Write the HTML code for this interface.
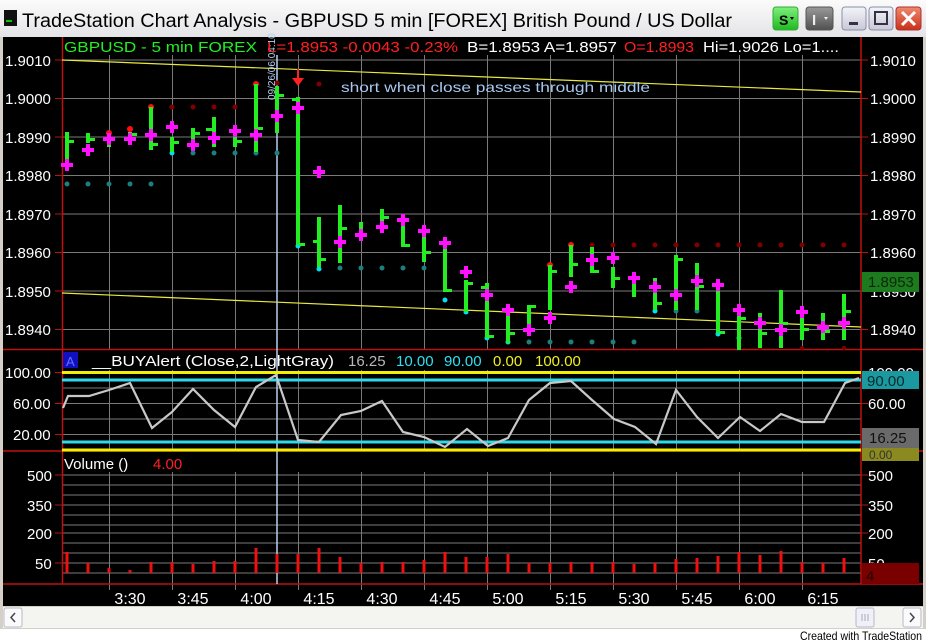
<!DOCTYPE html>
<html><head><meta charset="utf-8"><style>
html,body{margin:0;padding:0;background:#fff;width:926px;height:643px;overflow:hidden}
svg{display:block}
text{font-family:"Liberation Sans",sans-serif}
</style></head><body>
<svg width="926" height="643" viewBox="0 0 926 643" xmlns="http://www.w3.org/2000/svg">
<defs>
<linearGradient id="tb" x1="0" y1="0" x2="0" y2="1"><stop offset="0" stop-color="#fbfbfb"/><stop offset="1" stop-color="#e4e4e8"/></linearGradient>
<linearGradient id="gs" x1="0" y1="0" x2="0" y2="1"><stop offset="0" stop-color="#7ff07f"/><stop offset="1" stop-color="#1fb81f"/></linearGradient>
<linearGradient id="gi" x1="0" y1="0" x2="0" y2="1"><stop offset="0" stop-color="#9a9a9a"/><stop offset="1" stop-color="#505050"/></linearGradient>
<linearGradient id="gb" x1="0" y1="0" x2="0" y2="1"><stop offset="0" stop-color="#f4f4fa"/><stop offset="1" stop-color="#c8c8d8"/></linearGradient>
<linearGradient id="gr" x1="0" y1="0" x2="0" y2="1"><stop offset="0" stop-color="#f08a70"/><stop offset="1" stop-color="#c83018"/></linearGradient>
</defs>
<!-- title bar -->
<rect x="0" y="0" width="926" height="37" fill="url(#tb)"/>
<rect x="4" y="10" width="13" height="16" fill="#111"/><rect x="6" y="20" width="6" height="2" fill="#0c0"/>
<text x="22" y="27" font-size="19" fill="#000" textLength="710" lengthAdjust="spacingAndGlyphs">TradeStation Chart Analysis - GBPUSD  5 min  [FOREX] British Pound / US Dollar</text>
<rect x="773" y="7" width="25" height="23" rx="3" fill="url(#gs)" stroke="#3a3" />
<text x="779" y="25" font-size="14" font-weight="bold" fill="#000">S</text><path d="M790 17l4 0-2 3z" fill="#000"/>
<rect x="806" y="7" width="27" height="23" rx="3" fill="url(#gi)" stroke="#555"/>
<text x="812" y="25" font-size="15" font-weight="bold" fill="#eee">I</text><path d="M824 17l4 0-2 3z" fill="#eee"/>
<rect x="842" y="7" width="24" height="23" rx="3" fill="url(#gb)" stroke="#8890a8"/><rect x="849" y="22" width="9" height="3" fill="#334"/>
<rect x="869" y="7" width="24" height="23" rx="3" fill="url(#gb)" stroke="#8890a8"/><rect x="875" y="12" width="12" height="12" fill="none" stroke="#334" stroke-width="2"/>
<rect x="896" y="7" width="25" height="23" rx="3" fill="url(#gr)" stroke="#a33"/><path d="M902 12l13 13M915 12l-13 13" stroke="#fff" stroke-width="3"/>
<!-- frame -->
<rect x="0" y="37" width="926" height="592" fill="#d4d0c8"/>
<rect x="3" y="37" width="920" height="569" fill="#000"/>
<!-- grid -->
<g stroke="#7a7a7a" stroke-width="1">
<path d="M62 60H861M62 98.5H861M62 137H861M62 175.5H861M62 214H861M62 252.5H861M62 291H861M62 329.5H861"/>
<path d="M62 372.5H861M62 388H861M62 403.5H861M62 419H861M62 434.5H861"/>
<path d="M62 475H861M62 485H861M62 495H861M62 505H861M62 515H861M62 525H861M62 533H861M62 543H861M62 553H861M62 563H861M62 573H861"/>
<path d="M109.5 55V349M172.5 55V349M235.5 55V349M298.5 55V349M361.5 55V349M424.5 55V349M487.5 55V349M550.5 55V349M613.5 55V349M676.5 55V349M739.5 55V349M802.5 55V349"/>
<path d="M109.5 370V451M172.5 370V451M235.5 370V451M298.5 370V451M361.5 370V451M424.5 370V451M487.5 370V451M550.5 370V451M613.5 370V451M676.5 370V451M739.5 370V451M802.5 370V451"/>
<path d="M109.5 472V590M172.5 472V590M235.5 472V590M298.5 472V590M361.5 472V590M424.5 472V590M487.5 472V590M550.5 472V590M613.5 472V590M676.5 472V590M739.5 472V590M802.5 472V590"/>
</g>
<!-- panel borders -->
<g stroke="#c01010" stroke-width="1.5">
<path d="M62.5 37V584M861 37V584M3 349.5H923M3 451H923M3 584H923"/>
</g>
<g stroke="#c01010" stroke-width="1">
<path d="M55 60H62M55 98.5H62M55 137H62M55 175.5H62M55 214H62M55 252.5H62M55 291H62M55 329.5H62M861 60H868M861 98.5H868M861 137H868M861 175.5H868M861 214H868M861 252.5H868M861 291H868M861 329.5H868"/>
<path d="M55 372.5H62M55 403.5H62M55 434.5H62M861 403.5H868M55 475H62M55 505H62M55 533H62M55 563H62M861 475H868M861 505H868M861 533H868"/>
</g>
<!-- trend lines -->
<path d="M62 60L861 92M62 293L861 327" stroke="#e8e840" stroke-width="1.2" fill="none"/>
<!-- cursor line -->
<path d="M277 55V584" stroke="#b8d0f0" stroke-width="1.5"/>
<!-- dots -->
<g fill="#1a8080">
<circle cx="67" cy="184" r="2.5"/><circle cx="88" cy="184" r="2.5"/><circle cx="109" cy="184" r="2.5"/><circle cx="130" cy="184" r="2.5"/><circle cx="151" cy="184" r="2.5"/>
<circle cx="193" cy="153" r="2.5"/><circle cx="214" cy="153" r="2.5"/><circle cx="235" cy="153" r="2.5"/><circle cx="256" cy="153" r="2.5"/><circle cx="277" cy="153" r="2.5"/>
<circle cx="340" cy="268" r="2.5"/><circle cx="361" cy="268" r="2.5"/><circle cx="382" cy="268" r="2.5"/><circle cx="403" cy="268" r="2.5"/><circle cx="424" cy="268" r="2.5"/>
<circle cx="529" cy="342" r="2.5"/><circle cx="550" cy="342" r="2.5"/><circle cx="571" cy="342" r="2.5"/><circle cx="592" cy="342" r="2.5"/><circle cx="613" cy="342" r="2.5"/><circle cx="634" cy="342" r="2.5"/>
<circle cx="676" cy="311" r="2.5"/><circle cx="697" cy="311" r="2.5"/>
</g>
<g fill="#00e0f0">
<circle cx="172" cy="153" r="2.5"/><circle cx="298" cy="246" r="2.5"/><circle cx="319" cy="269" r="2.5"/><circle cx="445" cy="300" r="2.5"/><circle cx="466" cy="312" r="2.5"/><circle cx="487" cy="338" r="2.5"/><circle cx="508" cy="342" r="2.5"/><circle cx="655" cy="311" r="2.5"/><circle cx="718" cy="334" r="2.5"/><circle cx="739" cy="338" r="2.5"/>
</g>
<g fill="#800000">
<circle cx="172" cy="107" r="2.5"/><circle cx="193" cy="107" r="2.5"/><circle cx="214" cy="107" r="2.5"/><circle cx="235" cy="107" r="2.5"/><circle cx="277" cy="83" r="2.5"/><circle cx="319" cy="84" r="2.5"/>
<circle cx="592" cy="245" r="2.5"/><circle cx="613" cy="245" r="2.5"/><circle cx="634" cy="245" r="2.5"/><circle cx="655" cy="245" r="2.5"/><circle cx="676" cy="245" r="2.5"/><circle cx="697" cy="245" r="2.5"/><circle cx="718" cy="245" r="2.5"/><circle cx="739" cy="245" r="2.5"/><circle cx="760" cy="245" r="2.5"/><circle cx="781" cy="245" r="2.5"/><circle cx="802" cy="245" r="2.5"/><circle cx="823" cy="245" r="2.5"/><circle cx="844" cy="245" r="2.5"/>
<circle cx="760" cy="348" r="2"/><circle cx="802" cy="348" r="2"/><circle cx="844" cy="348" r="2"/>
</g>
<g fill="#ff1010">
<circle cx="109" cy="133" r="3"/><circle cx="130" cy="129" r="3"/><circle cx="151" cy="107" r="3"/><circle cx="256" cy="84" r="3"/><circle cx="550" cy="265" r="3"/><circle cx="571" cy="245" r="3"/>
</g>
<!-- green bars: rect + ticks -->
<g fill="#22ee22">
<rect x="65" y="132" width="4" height="30"/><rect x="69" y="140" width="5" height="3"/>
<rect x="86" y="133" width="4" height="10"/><rect x="90" y="138" width="5" height="3"/>
<rect x="107" y="135" width="4" height="12"/>
<rect x="128" y="132" width="4" height="11"/><rect x="132" y="133" width="5" height="3"/>
<rect x="149" y="107" width="4" height="43"/><rect x="153" y="143" width="5" height="3"/>
<rect x="170" y="137" width="4" height="15"/><rect x="174" y="141" width="5" height="3"/>
<rect x="191" y="128" width="4" height="20"/><rect x="195" y="132" width="5" height="3"/>
<rect x="212" y="117" width="4" height="30"/><rect x="206" y="128" width="6" height="3"/>
<rect x="233" y="125" width="4" height="22"/><rect x="237" y="140" width="5" height="3"/>
<rect x="254" y="84" width="4" height="68"/><rect x="258" y="127" width="5" height="3"/>
<rect x="275" y="86" width="4" height="47"/><rect x="279" y="94" width="5" height="3"/>
<rect x="296" y="97" width="4" height="148"/><rect x="300" y="243" width="5" height="3"/><rect x="292" y="98" width="4" height="3"/>
<rect x="317" y="217" width="4" height="50"/><rect x="321" y="258" width="5" height="3"/><rect x="313" y="240" width="4" height="3"/>
<rect x="338" y="205" width="4" height="58"/><rect x="342" y="227" width="5" height="3"/>
<rect x="359" y="222" width="4" height="8"/>
<rect x="380" y="209" width="4" height="14"/><rect x="384" y="216" width="5" height="3"/>
<rect x="401" y="225" width="4" height="22"/><rect x="405" y="244" width="5" height="3"/>
<rect x="422" y="225" width="4" height="37"/><rect x="426" y="251" width="5" height="3"/>
<rect x="443" y="247" width="4" height="45"/><rect x="447" y="289" width="5" height="3"/>
<rect x="464" y="280" width="4" height="32"/><rect x="468" y="282" width="5" height="3"/>
<rect x="485" y="283" width="4" height="55"/><rect x="489" y="335" width="5" height="3"/><rect x="481" y="286" width="4" height="3"/>
<rect x="506" y="308" width="4" height="35"/><rect x="510" y="332" width="5" height="3"/>
<rect x="527" y="305" width="4" height="25"/><rect x="531" y="305" width="5" height="3"/>
<rect x="548" y="265" width="4" height="45"/><rect x="552" y="270" width="5" height="3"/>
<rect x="569" y="245" width="4" height="32"/><rect x="573" y="263" width="5" height="3"/>
<rect x="590" y="247" width="4" height="26"/><rect x="594" y="270" width="5" height="3"/>
<rect x="611" y="267" width="4" height="21"/><rect x="615" y="277" width="5" height="3"/>
<rect x="632" y="282" width="4" height="15"/>
<rect x="653" y="278" width="4" height="32"/><rect x="657" y="302" width="5" height="3"/>
<rect x="674" y="255" width="4" height="55"/><rect x="678" y="258" width="5" height="3"/>
<rect x="695" y="263" width="4" height="47"/><rect x="699" y="285" width="5" height="3"/>
<rect x="716" y="285" width="4" height="48"/><rect x="720" y="331" width="5" height="3"/>
<rect x="737" y="313" width="4" height="37"/><rect x="741" y="317" width="5" height="3"/>
<rect x="758" y="313" width="4" height="35"/><rect x="762" y="332" width="5" height="3"/>
<rect x="779" y="290" width="4" height="58"/><rect x="783" y="322" width="5" height="3"/>
<rect x="800" y="318" width="4" height="22"/><rect x="804" y="328" width="5" height="3"/>
<rect x="821" y="313" width="4" height="27"/><rect x="825" y="330" width="5" height="3"/>
<rect x="842" y="294" width="4" height="46"/><rect x="846" y="310" width="5" height="3"/>
</g>
<!-- magenta crosses -->
<g fill="#ff10ff">
<path d="M61 163h12v4h-12zM65 159h4v12h-4z"/>
<path d="M82 148h12v4h-12zM86 144h4v12h-4z"/>
<path d="M103 137h12v4h-12zM107 133h4v12h-4z"/>
<path d="M124 137h12v4h-12zM128 133h4v12h-4z"/>
<path d="M145 133h12v4h-12zM149 129h4v12h-4z"/>
<path d="M166 125h12v4h-12zM170 121h4v12h-4z"/>
<path d="M187 143h12v4h-12zM191 139h4v12h-4z"/>
<path d="M208 136h12v4h-12zM212 132h4v12h-4z"/>
<path d="M229 129h12v4h-12zM233 125h4v12h-4z"/>
<path d="M250 133h12v4h-12zM254 129h4v12h-4z"/>
<path d="M271 114h12v4h-12zM275 110h4v12h-4z"/>
<path d="M292 106h12v4h-12zM296 102h4v12h-4z"/>
<path d="M313 170h12v4h-12zM317 166h4v12h-4z"/>
<path d="M334 240h12v4h-12zM338 236h4v12h-4z"/>
<path d="M355 233h12v4h-12zM359 229h4v12h-4z"/>
<path d="M376 225h12v4h-12zM380 221h4v12h-4z"/>
<path d="M397 218h12v4h-12zM401 214h4v12h-4z"/>
<path d="M418 229h12v4h-12zM422 225h4v12h-4z"/>
<path d="M439 241h12v4h-12zM443 237h4v12h-4z"/>
<path d="M460 270h12v4h-12zM464 266h4v12h-4z"/>
<path d="M481 293h12v4h-12zM485 289h4v12h-4z"/>
<path d="M502 308h12v4h-12zM506 304h4v12h-4z"/>
<path d="M523 328h12v4h-12zM527 324h4v12h-4z"/>
<path d="M544 316h12v4h-12zM548 312h4v12h-4z"/>
<path d="M565 285h12v4h-12zM569 281h4v12h-4z"/>
<path d="M586 258h12v4h-12zM590 254h4v12h-4z"/>
<path d="M607 256h12v4h-12zM611 252h4v12h-4z"/>
<path d="M628 276h12v4h-12zM632 272h4v12h-4z"/>
<path d="M649 285h12v4h-12zM653 281h4v12h-4z"/>
<path d="M670 293h12v4h-12zM674 289h4v12h-4z"/>
<path d="M691 279h12v4h-12zM695 275h4v12h-4z"/>
<path d="M712 283h12v4h-12zM716 279h4v12h-4z"/>
<path d="M733 308h12v4h-12zM737 304h4v12h-4z"/>
<path d="M754 321h12v4h-12zM758 317h4v12h-4z"/>
<path d="M775 328h12v4h-12zM779 324h4v12h-4z"/>
<path d="M796 310h12v4h-12zM800 306h4v12h-4z"/>
<path d="M817 325h12v4h-12zM821 321h4v12h-4z"/>
<path d="M838 321h12v4h-12zM842 317h4v12h-4z"/>
</g>
<!-- red arrow -->
<path d="M298 69V80" stroke="#ff2020" stroke-width="2"/><path d="M292 78h12l-6 8z" fill="#ff2020"/>
<!-- rotated date -->
<text transform="translate(275,100) rotate(-90)" font-size="10" fill="#b8d0f0">09/26/06 04:10</text>
<text x="341" y="92" font-size="14" fill="#a8c8f0" textLength="309" lengthAdjust="spacingAndGlyphs">short when close passes through middle</text>
<!-- header -->
<g font-size="15">
<text x="64" y="52" fill="#22ee22" textLength="193" lengthAdjust="spacingAndGlyphs">GBPUSD - 5 min  FOREX</text>
<text x="267" y="52" fill="#ff2020" textLength="191" lengthAdjust="spacingAndGlyphs">L=1.8953  -0.0043  -0.23%</text>
<text x="467" y="52" fill="#fff" textLength="150" lengthAdjust="spacingAndGlyphs">B=1.8953  A=1.8957</text>
<text x="624" y="52" fill="#ff2020" textLength="70" lengthAdjust="spacingAndGlyphs">O=1.8993</text>
<text x="703" y="52" fill="#fff" textLength="136" lengthAdjust="spacingAndGlyphs">Hi=1.9026  Lo=1....</text>
</g>
<!-- price labels -->
<g font-size="15" fill="#fff">
<text x="5" y="66">1.9010</text><text x="5" y="104">1.9000</text><text x="5" y="143">1.8990</text><text x="5" y="181">1.8980</text><text x="5" y="220">1.8970</text><text x="5" y="258">1.8960</text><text x="5" y="297">1.8950</text><text x="5" y="335">1.8940</text>
<text x="870" y="66">1.9010</text><text x="870" y="104">1.9000</text><text x="870" y="143">1.8990</text><text x="870" y="181">1.8980</text><text x="870" y="220">1.8970</text><text x="870" y="258">1.8960</text><text x="870" y="297">1.8950</text><text x="870" y="335">1.8940</text>
</g>
<rect x="862" y="272" width="57" height="20" fill="#1e7a1e"/>
<text x="868" y="287" font-size="15" fill="#0a2a0a">1.8953</text>
<!-- indicator panel -->
<rect x="63" y="352" width="15" height="16" fill="#1010c0"/><text x="66" y="366" font-size="13" fill="#6070ff">A</text>
<g font-size="15">
<text x="92" y="366" fill="#fff" textLength="242" lengthAdjust="spacingAndGlyphs">__BUYAlert  (Close,2,LightGray)</text>
<text x="348" y="366" fill="#b8b8b8">16.25</text>
<text x="396" y="366" fill="#30e0f0">10.00</text>
<text x="444" y="366" fill="#30e0f0">90.00</text>
<text x="493" y="366" fill="#f0f020">0.00</text>
<text x="535" y="366" fill="#f0f020">100.00</text>
</g>
<path d="M62 372.5H861M62 450H861" stroke="#f0f000" stroke-width="3"/>
<path d="M62 380H861M62 442H861" stroke="#30d8e8" stroke-width="3"/>
<polyline fill="none" stroke="#c8c8c8" stroke-width="2.2" points="63,408 68,396 89,396 109,390 130,383 152,428 172,412 193,389 214,410 235,427 256,387 276,375 298,440 319,442 341,415 361,411 382,401 403,432 424,437 445,447 467,429 488,446 508,438 529,400 550,383 571,381 592,400 614,419 635,427 656,444 676,390 697,417 718,438 740,417 760,431 781,414 802,422 824,422 845,383 859,378"/>
<g font-size="15" fill="#fff">
<text x="5" y="378">100.00</text><text x="13" y="409">60.00</text><text x="13" y="440">20.00</text>
<text x="868" y="378">100.00</text><text x="868" y="409">60.00</text>
</g>
<rect x="862" y="371" width="57" height="18" fill="#1a9aa0"/><text x="867" y="386" font-size="15" fill="#0a2a2a">90.00</text>
<rect x="862" y="428" width="57" height="20" fill="#6a6a6a"/><text x="869" y="443" font-size="15" fill="#111">16.25</text>
<rect x="862" y="448" width="57" height="13" fill="#8a8a20"/><text x="869" y="459" font-size="12" fill="#333">0.00</text>
<!-- volume -->
<text x="64" y="469" font-size="15" fill="#fff">Volume  ()</text><text x="153" y="469" font-size="15" fill="#ff2020">4.00</text>
<g font-size="15" fill="#fff">
<text x="27" y="481">500</text><text x="27" y="511">350</text><text x="27" y="539">200</text><text x="35" y="569">50</text>
<text x="868" y="481">500</text><text x="868" y="511">350</text><text x="868" y="539">200</text><text x="868" y="569">50</text>
</g>
<rect x="862" y="563" width="57" height="21" fill="#7a0000"/><text x="866" y="581" font-size="15" fill="#200">4</text>
<g stroke="#ee1010" stroke-width="3">
<path d="M67 573V552M88 573V563M109 573V568M130 573V570M151 573V562M172 573V562M193 573V564M214 573V561M235 573V561M256 573V548M277 573V554M298 573V554M319 573V548M340 573V557M361 573V563M382 573V562M403 573V562M424 573V560M445 573V552M466 573V557M487 573V557M508 573V554M529 573V563M550 573V563M571 573V562M592 573V562M613 573V562M634 573V564M655 573V563M676 573V559M697 573V558M718 573V556M739 573V552M760 573V555M781 573V551M802 573V562M823 573V563M844 573V558"/>
</g>
<!-- time axis -->
<g font-size="16" fill="#fff" text-anchor="middle">
<text x="130" y="604">3:30</text><text x="193" y="604">3:45</text><text x="256" y="604">4:00</text><text x="319" y="604">4:15</text><text x="382" y="604">4:30</text><text x="445" y="604">4:45</text><text x="508" y="604">5:00</text><text x="571" y="604">5:15</text><text x="634" y="604">5:30</text><text x="697" y="604">5:45</text><text x="760" y="604">6:00</text><text x="823" y="604">6:15</text>
</g>
<!-- scrollbar -->
<rect x="3" y="607" width="920" height="21" fill="#f4f4f0"/>
<rect x="4" y="608" width="18" height="19" rx="2" fill="#fafafa" stroke="#b8b8c8"/><path d="M15 613l-4 4.5 4 4.5" stroke="#445" stroke-width="1.5" fill="none"/>
<rect x="903" y="608" width="18" height="19" rx="2" fill="#fafafa" stroke="#b8b8c8"/><path d="M910 613l4 4.5-4 4.5" stroke="#445" stroke-width="1.5" fill="none"/>
<rect x="856" y="608" width="18" height="19" rx="2" fill="#f0f0f8" stroke="#b8b8c8"/><path d="M862 614v7M865 614v7M868 614v7" stroke="#aab" stroke-width="1"/>
<rect x="0" y="629" width="926" height="14" fill="#fff"/>
<text x="922" y="640" font-size="12" fill="#000" text-anchor="end" textLength="122" lengthAdjust="spacingAndGlyphs">Created with TradeStation</text>
</svg>
</body></html>
